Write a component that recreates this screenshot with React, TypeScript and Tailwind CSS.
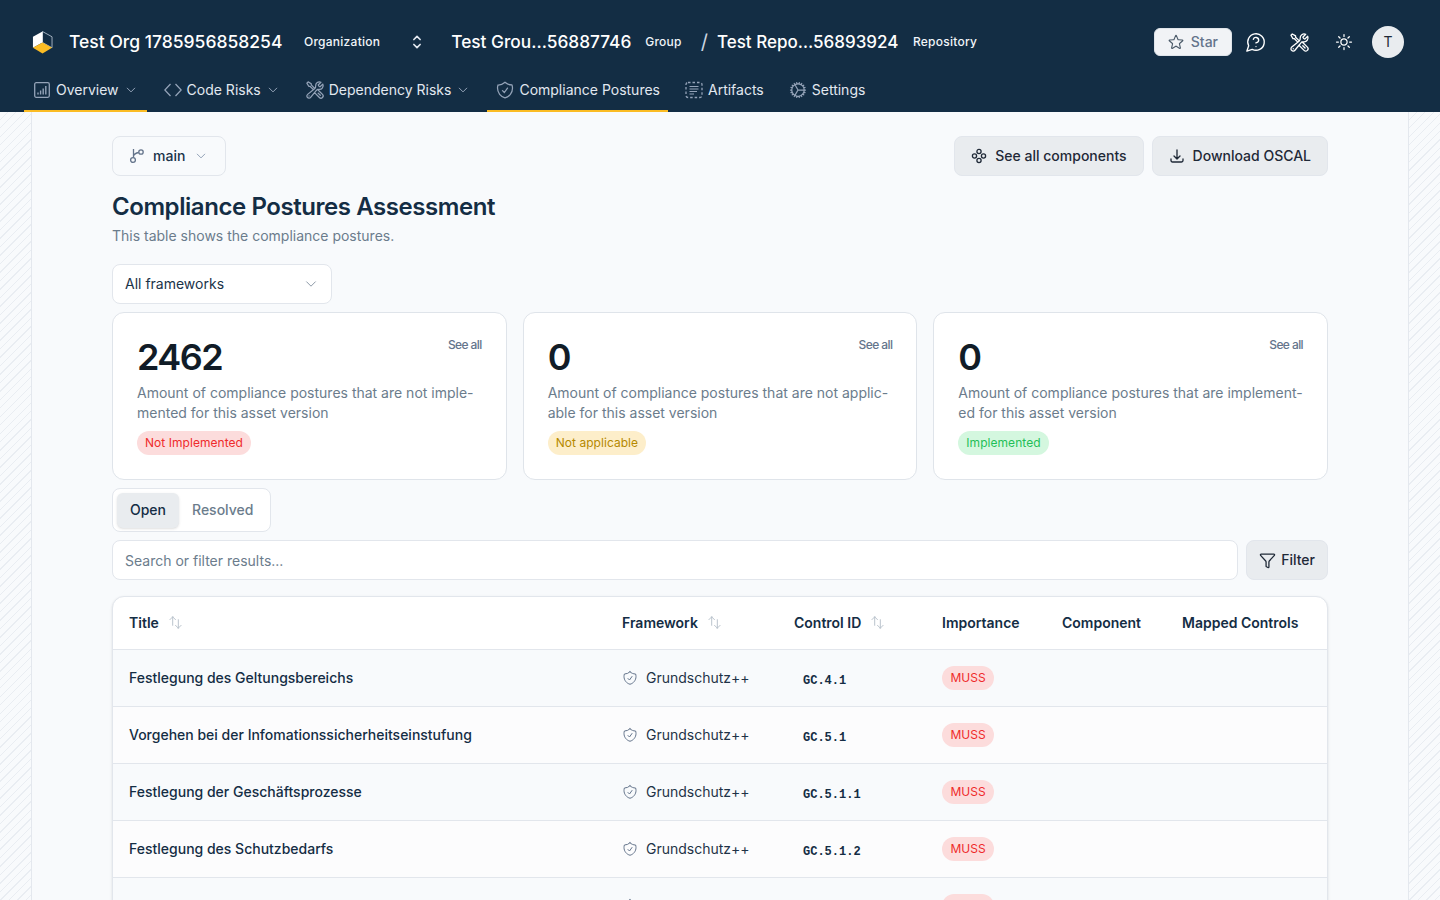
import React from 'react'
import {
  HiOutlineChevronDown,
  HiOutlineChevronUpDown,
  HiOutlineWrenchScrewdriver,
  HiOutlineShieldCheck,
  HiOutlineCog,
  HiOutlineStar,
  HiOutlineSun,
  HiOutlineArrowDownTray,
  HiOutlineArrowsUpDown,
} from 'react-icons/hi2'
import { LuMessageCircleQuestion } from 'react-icons/lu'
import { Funnel } from 'lucide-react'

function Logo() {
  return (
    <svg width="21" height="25" viewBox="0 0 22 25" className="shrink-0">
      <path d="M11 1 L21 6.5 V18 L11 12.5 Z" fill="none" stroke="#cbd5e1" strokeWidth="0.8" />
      <path d="M11 1 L1 6.5 V18 L11 12.5 Z" fill="#ffffff" />
      <path d="M1 18 L11 12.5 L21 18 L11 24 Z" fill="#fbbc24" />
    </svg>
  )
}

function OverviewIcon() {
  return (
    <svg width="16" height="16" viewBox="0 0 16 16" fill="none" stroke="#94a3b8" className="shrink-0 ml-0.5">
      <rect x="0.7" y="0.7" width="14.6" height="14.6" rx="1.5" strokeWidth="1.3" />
      <path d="M4 12.5V10.5M6.6 12.5V8.5M9.2 12.5V6.5M11.8 12.5V4" strokeWidth="1.4" />
    </svg>
  )
}

function CodeIcon() {
  return (
    <svg width="18" height="14" viewBox="0 0 18 14" fill="none" stroke="#94a3b8" strokeWidth="1.3" className="shrink-0">
      <path d="M6.5 1 L0.8 7 L6.5 13" />
      <path d="M11.5 1 L17.2 7 L11.5 13" />
    </svg>
  )
}

function ArtifactsIcon() {
  return (
    <svg width="18" height="18" viewBox="0 0 18 18" fill="none" stroke="#94a3b8" className="shrink-0">
      <rect x="1" y="1.5" width="16" height="15" rx="2" strokeWidth="1.3" strokeDasharray="2.5 2" />
      <path d="M4.5 5.5H13.5M4.5 8H13.5M4.5 10.5H12M4.5 13H9" strokeWidth="1.2" />
    </svg>
  )
}

function BranchIcon() {
  return (
    <svg width="16" height="16" viewBox="0 0 16 16" fill="none" stroke="#64748b" strokeWidth="1.3" className="shrink-0">
      <circle cx="4" cy="12" r="2.4" />
      <circle cx="12" cy="4" r="2.2" />
      <path d="M4.5 9.6V1M4.5 8C5 6 7 5 9.8 4.5" />
    </svg>
  )
}

function ComponentsIcon() {
  return (
    <svg width="16" height="16" viewBox="0 0 16 16" fill="none" stroke="#1f2937" strokeWidth="1.3" className="shrink-0">
      <circle cx="8" cy="3.5" r="2.1" />
      <circle cx="8" cy="12.5" r="2.1" />
      <circle cx="3.5" cy="8" r="2.1" />
      <circle cx="12.5" cy="8" r="2.1" />
    </svg>
  )
}

function NavItem({ icon, label, chevron, active, padRight }: { icon: React.ReactNode; label: string; chevron?: boolean; active?: boolean; padRight: string }) {
  return (
    <div className={`flex items-center pl-2 pt-[2px] h-[44px] border-b-2 text-sm text-[#e2e8f0] ${padRight} ${active ? 'border-[#fbbc24]' : 'border-transparent'}`}>
      {icon}
      <span>{label}</span>
      {chevron && <HiOutlineChevronDown className="text-[#94a3b8] stroke-2 w-3 h-3 ml-[6px]" />}
    </div>
  )
}

function Crumb({ name, kind, nameClass }: { name: string; kind: string; nameClass: string }) {
  return (
    <div className="flex items-center">
      <span className={`font-medium text-white whitespace-nowrap ${nameClass}`}>{name}</span>
      <span className="text-xs font-medium tracking-[0.25px] text-[#f1f5f9] whitespace-nowrap">{kind}</span>
    </div>
  )
}

function StatCard({ count, lines, badge, badgeClass }: { count: string; lines: string[]; badge: string; badgeClass: string }) {
  return (
    <div className="relative bg-white border border-[#dfe4ea] rounded-xl h-[168px] px-6 pt-[22px]">
      <span className="absolute right-6 top-[24px] text-xs font-medium text-[#64748b] tracking-[-0.6px]">See all</span>
      <div className="text-[36px] leading-[44px] font-semibold text-[#111c27] tracking-[-1.5px]">{count}</div>
      <p className="mt-[4px] text-sm leading-5 text-[#6b7c8c] whitespace-nowrap">
        {lines[0]}
        <br />
        {lines[1]}
      </p>
      <span className={`inline-block mt-[8px] px-2 h-6 leading-6 rounded-full text-xs tracking-[0.05px] ${badgeClass}`}>{badge}</span>
    </div>
  )
}

const rows = [
  { title: 'Festlegung des Geltungsbereichs', id: 'GC.4.1', bg: 'bg-[#f8fafc]' },
  { title: 'Vorgehen bei der Infomationssicherheitseinstufung', id: 'GC.5.1', bg: 'bg-[#fcfcfd]' },
  { title: 'Festlegung der Geschäftsprozesse', id: 'GC.5.1.1', bg: 'bg-[#f8fafc]' },
  { title: 'Festlegung des Schutzbedarfs', id: 'GC.5.1.2', bg: 'bg-[#fcfcfd]' },
]

function HeadCell({ label, sort }: { label: string; sort?: boolean }) {
  return (
    <th className="px-4 text-left text-sm font-semibold text-[#142d44] h-[52px] whitespace-nowrap">
      <span className="flex items-center">
        {label}
        {sort && <HiOutlineArrowsUpDown className="ml-[9px] w-[15px] h-[15px] text-[#b6c0ca]" />}
      </span>
    </th>
  )
}

const hatch =
  'w-[32px] shrink-0 border-[#e4e8ee] bg-[repeating-linear-gradient(135deg,transparent,transparent_5px,#e9edf2_5px,#e9edf2_6px)]'

export default function App() {
  return (
    <div className="h-screen overflow-hidden bg-[#f8fafc] font-['Inter',sans-serif]">
      <header className="bg-[#132d44] h-[112px]">
        <div className="flex items-center h-[68px] pl-[32px] pr-9 pt-[16px]">
          <Logo />
          <div className="ml-[16px] flex items-center">
            <Crumb name="Test Org 1785956858254" kind="Organization" nameClass="w-[235px] text-[17.5px]" />
            <HiOutlineChevronUpDown className="ml-[27px] text-[#e2e8f0] stroke-2 w-5 h-5" />
            <div className="ml-[24px]">
              <Crumb name="Test Grou…56887746" kind="Group" nameClass="w-[194px] text-[17.3px]" />
            </div>
            <span className="ml-[19px] mr-[9px] text-[20px] text-[#cbd5e1]">/</span>
            <Crumb name="Test Repo…56893924" kind="Repository" nameClass="w-[196px] pt-[2px] text-[17px]" />
          </div>
          <div className="ml-auto flex items-center">
            <div className="flex items-center h-7 pl-3 pr-[13px] rounded-md bg-[#f1f3f6] border border-[#dfe4ea] text-sm font-medium text-[#64748b]">
              <HiOutlineStar className="w-[18px] h-[18px] mr-[6px] text-[#4b5a69]" />
              Star
            </div>
            <LuMessageCircleQuestion className="ml-[13px] w-[22px] h-[22px] text-white stroke-[1.5]" />
            <HiOutlineWrenchScrewdriver className="ml-[22px] w-[21px] h-[21px] text-white" />
            <HiOutlineSun className="ml-[24px] w-5 h-5 text-white" />
            <div className="ml-[18px] w-8 h-8 rounded-full bg-[#e9ecef] flex items-center justify-center text-sm text-[#1f2937]">T</div>
          </div>
        </div>
        <nav className="flex items-center gap-[9px] pl-6">
          <NavItem active chevron padRight="pr-[10px]" label="Overview" icon={<span className="w-6 flex"><OverviewIcon /></span>} />
          <NavItem chevron padRight="pr-2" label="Code Risks" icon={<span className="w-[23px] flex"><CodeIcon /></span>} />
          <NavItem chevron padRight="pr-[9px]" label="Dependency Risks" icon={<span className="w-[25px] flex"><HiOutlineWrenchScrewdriver className="w-5 h-5 ml-px text-[#94a3b8]" /></span>} />
          <NavItem active padRight="pr-2" label="Compliance Postures" icon={<span className="w-6 flex"><HiOutlineShieldCheck className="w-5 h-5 text-[#94a3b8]" /></span>} />
          <NavItem padRight="pr-[7px]" label="Artifacts" icon={<span className="w-[23px] flex"><ArtifactsIcon /></span>} />
          <NavItem padRight="pr-2" label="Settings" icon={<span className="w-6 flex"><HiOutlineCog className="w-5 h-5 text-[#94a3b8]" /></span>} />
        </nav>
      </header>

      <div className="flex h-[788px]">
        <div className={`${hatch} border-r`} />
        <main className="flex-1 px-20 pt-6 overflow-hidden">
          <div className="flex items-center justify-between">
            <div className="flex items-center h-10 pl-4 pr-[18px] rounded-lg border border-[#e2e6ec] text-sm font-medium text-[#1a3349]">
              <BranchIcon />
              <span className="ml-2">main</span>
              <HiOutlineChevronDown className="text-[#94a3b8] stroke-2 w-3 h-3 ml-[10px]" />
            </div>
            <div className="flex gap-2">
              <div className="flex items-center gap-2 h-10 px-4 rounded-lg bg-[#e9ecef] border border-[#e2e6ec] text-sm font-medium text-[#1f2937]">
                <ComponentsIcon />
                See all components
              </div>
              <div className="flex items-center gap-2 h-10 px-4 rounded-lg bg-[#e9ecef] border border-[#e2e6ec] text-sm font-medium text-[#1f2937]">
                <HiOutlineArrowDownTray className="w-4 h-4 stroke-2" />
                Download OSCAL
              </div>
            </div>
          </div>

          <h1 className="mt-[15px] text-2xl leading-8 font-semibold tracking-[-0.43px] text-[#142d44]">Compliance Postures Assessment</h1>
          <p className="mt-[3px] text-sm leading-5 text-[#6b7c8c]">This table shows the compliance postures.</p>

          <div className="mt-[18px] flex items-center justify-between w-[220px] h-10 pl-3 pr-[13px] bg-white border border-[#e2e6ec] rounded-lg text-sm text-[#1a3349]">
            All frameworks
            <HiOutlineChevronDown className="w-[14px] h-[14px] text-[#7b8a99]" />
          </div>

          <div className="mt-2 grid grid-cols-3 gap-4">
            <StatCard
              count="2462"
              lines={['Amount of compliance postures that are not imple-', 'mented for this asset version']}
              badge="Not Implemented"
              badgeClass="bg-[#fcdcdc] text-[#ef2b2b]"
            />
            <StatCard
              count="0"
              lines={['Amount of compliance postures that are not applic-', 'able for this asset version']}
              badge="Not applicable"
              badgeClass="bg-[#fdeeca] text-[#b58900]"
            />
            <StatCard
              count="0"
              lines={['Amount of compliance postures that are implement-', 'ed for this asset version']}
              badge="Implemented"
              badgeClass="bg-[#d4f7df] text-[#1fbf57]"
            />
          </div>

          <div className="mt-2 flex items-center h-11 w-[159px] p-1 bg-white border border-[#e2e6ec] rounded-lg text-sm font-medium">
            <span className="flex items-center justify-center h-[35px] w-[62px] rounded-md bg-[#e9ecef] text-[#142d44] shadow-sm">Open</span>
            <span className="ml-[13px] text-[#6b7c8c]">Resolved</span>
          </div>

          <div className="mt-2 flex gap-2">
            <div className="flex-1 flex items-center h-10 px-3 pt-[2px] bg-white border border-[#e2e6ec] rounded-lg text-sm text-[#6b7c8c]">
              Search or filter results...
            </div>
            <div className="flex items-center gap-[5px] h-10 px-3 rounded-lg bg-[#e9ecef] border border-[#e2e6ec] text-sm font-medium text-[#1f2937]">
              <Funnel className="w-[17px] h-[17px]" strokeWidth={1.8} />
              Filter
            </div>
          </div>

          <div className="mt-4 bg-white border border-[#e2e6ec] rounded-xl shadow-sm overflow-hidden">
            <table className="w-full table-fixed border-collapse">
              <colgroup>
                <col className="w-[493px]" />
                <col className="w-[172px]" />
                <col className="w-[148px]" />
                <col className="w-[120px]" />
                <col className="w-[120px]" />
                <col />
              </colgroup>
              <thead>
                <tr>
                  <HeadCell label="Title" sort />
                  <HeadCell label="Framework" sort />
                  <HeadCell label="Control ID" sort />
                  <HeadCell label="Importance" />
                  <HeadCell label="Component" />
                  <HeadCell label="Mapped Controls" />
                </tr>
              </thead>
              <tbody>
                {rows.map((r) => (
                  <tr key={r.id} className={`h-[57px] border-t border-[#e2e6ec] ${r.bg}`}>
                    <td className="px-4 text-sm font-medium text-[#142d44] whitespace-nowrap">{r.title}</td>
                    <td className="px-4">
                      <span className="flex items-center text-sm text-[#1f3347]">
                        <HiOutlineShieldCheck className="w-4 h-4 text-[#64748b] mr-2" />
                        Grundschutz++
                      </span>
                    </td>
                    <td className="px-4">
                      <span className="ml-[9px] font-['Liberation_Mono',monospace] text-xs font-bold text-[#142d44]">{r.id}</span>
                    </td>
                    <td className="px-4">
                      <span className="flex items-center justify-center w-[52px] h-6 rounded-full text-xs bg-[#fcdcdc] text-[#ef2b2b]">MUSS</span>
                    </td>
                    <td />
                    <td />
                  </tr>
                ))}
                {/* fifth row only peeks in at the bottom edge */}
                <tr className="h-[57px] border-t border-[#e2e6ec] bg-[#f8fafc]">
                  <td />
                  <td className="px-4">
                    <HiOutlineShieldCheck className="w-4 h-4 text-[#64748b]" />
                  </td>
                  <td />
                  <td className="px-4">
                    <span className="block w-[52px] h-6 rounded-full bg-[#fcdcdc]" />
                  </td>
                  <td />
                  <td />
                </tr>
              </tbody>
            </table>
          </div>
        </main>
        <div className={`${hatch} border-l`} />
      </div>
    </div>
  )
}
